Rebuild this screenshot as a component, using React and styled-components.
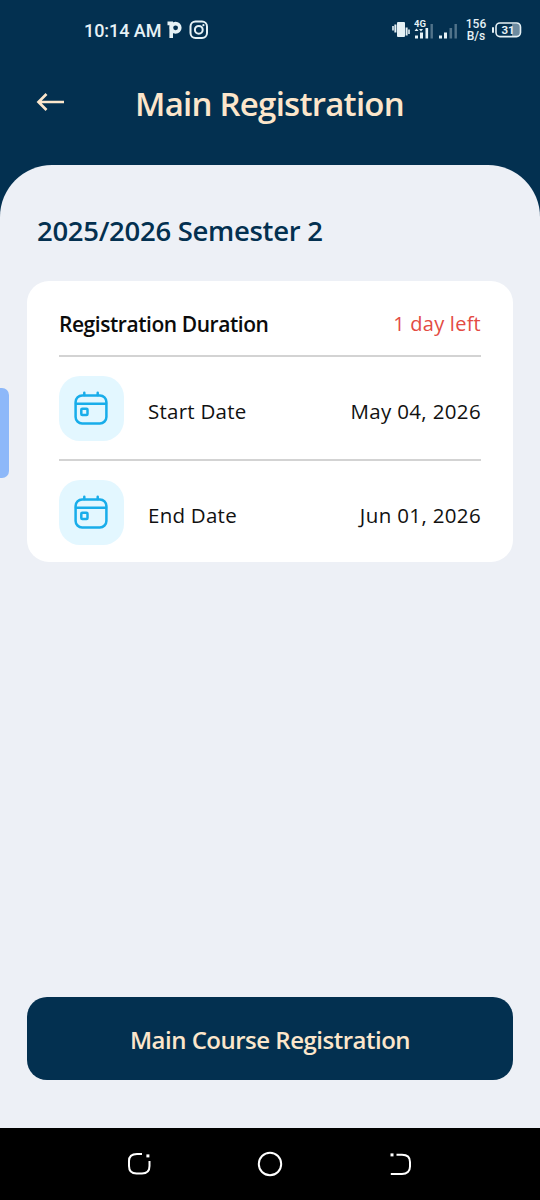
import styled, { createGlobalStyle } from "styled-components";

const GlobalStyle = createGlobalStyle`
  * {
    box-sizing: border-box;
  }

  body {
    margin: 0;
    background-color: #033050;
    font-family: "Open Sans", "Noto Sans", sans-serif;
  }
`;

const Screen = styled.div`
  position: relative;
  display: flex;
  flex-direction: column;
  width: 540px;
  height: 1200px;
  overflow: hidden;
  background-color: #033050;
`;

const StatusBar = styled.div`
  display: flex;
  justify-content: space-between;
  align-items: center;
  height: 60px;
  padding: 0 18px 0 84px;
  color: #e6f1f5;
  font-family: Roboto, sans-serif;
`;

const StatusGroup = styled.div`
  display: flex;
  align-items: center;
`;

const Time = styled.span`
  width: 83px;
  padding-top: 1px;
  font-size: 18px;
  font-weight: 500;
  letter-spacing: -0.05px;
  white-space: nowrap;
`;

const Speed = styled.div`
  width: 22px;
  margin: 0 5px 0 7px;
  font-size: 12px;
  font-weight: 500;
  line-height: 12px;
  text-align: center;
`;

const Header = styled.header`
  display: flex;
  align-items: center;
  height: 105px;
  padding: 0 36px 21px;
`;

const BackButton = styled.button`
  display: flex;
  width: 99px;
  height: 28px;
  padding: 0;
  border: none;
  background: transparent;
`;

const Title = styled.h1`
  margin: 4px 0 0;
  color: #fce6cb;
  font-size: 33px;
  font-weight: 600;
  letter-spacing: -0.75px;
  line-height: 44px;
  white-space: nowrap;
`;

const Sheet = styled.main`
  display: flex;
  flex: 1;
  flex-direction: column;
  padding: 44px 27px 48px;
  border-radius: 52px 52px 0 0;
  background-color: #edf0f6;
`;

const Semester = styled.h2`
  margin: 0 0 28px 10px;
  color: #033050;
  font-size: 27.5px;
  font-weight: 600;
  letter-spacing: -0.3px;
  line-height: 44px;
  white-space: nowrap;
`;

const Card = styled.section`
  height: 281px;
  padding: 10px 32px 0;
  border-radius: 22px;
  background-color: #ffffff;
`;

const CardHeader = styled.div`
  display: flex;
  justify-content: space-between;
  align-items: center;
  height: 66px;
  padding-top: 1px;
  border-bottom: 2px solid #d3d3d3;
`;

const CardTitle = styled.h3`
  margin: 0;
  color: #0b0b0b;
  font-size: 21px;
  font-weight: 600;
  letter-spacing: -0.45px;
`;

const Remaining = styled.span`
  color: #e34b43;
  font-size: 20px;
  letter-spacing: 0.25px;
`;

const DateRow = styled.div`
  display: flex;
  align-items: center;
  height: ${({ $last }) => ($last ? "102px" : "104px")};
  border-bottom: ${({ $last }) => ($last ? "none" : "2px solid #d3d3d3")};
`;

const IconTile = styled.div`
  display: flex;
  align-items: center;
  justify-content: center;
  width: 65px;
  height: 65px;
  padding-right: 2px;
  border-radius: 21px;
  background-color: #e3f7ff;
`;

const DateLabel = styled.span`
  margin: 5px auto 0 24px;
  color: #111111;
  font-size: 20.5px;
  letter-spacing: 0.25px;
`;

const DateValue = styled.span`
  margin-top: 5px;
  color: #111111;
  font-size: 20.5px;
  letter-spacing: 0.35px;
`;

const RegisterButton = styled.button`
  height: 83px;
  margin-top: auto;
  padding: 2px 0 0;
  border: none;
  border-radius: 20px;
  background-color: #033050;
  color: #fce6cb;
  font-family: inherit;
  font-size: 24px;
  font-weight: 600;
  letter-spacing: -0.5px;
`;

const NavBar = styled.nav`
  display: flex;
  justify-content: space-between;
  align-items: center;
  height: 72px;
  padding: 0 126px;
  background-color: #000000;
`;

const EdgeHandle = styled.div`
  position: absolute;
  top: 388px;
  left: 0;
  width: 9px;
  height: 90px;
  border-radius: 0 7px 7px 0;
  background-color: #8db8f9;
`;

const StyledCamera = styled.svg`
  margin-left: 7px;
`;

const StyledVibrate = styled.svg`
  margin-right: 4px;
`;

function PIcon() {
  return (
    <svg width="15" height="18" viewBox="0 0 15 18" fill="none">
      <path d="M0.5 2.4H4.2V17" stroke="#e6f1f5" strokeWidth="3.6" />
      <circle cx="8.6" cy="6.8" r="4.2" stroke="#e6f1f5" strokeWidth="3.6" />
    </svg>
  );
}

function CameraIcon() {
  return (
    <StyledCamera
      width="20"
      height="20"
      viewBox="0 0 20 20"
      fill="none"
      stroke="#e6f1f5"
      strokeWidth="2"
    >
      <rect x="1.5" y="1.5" width="16.5" height="16.5" rx="5" />
      <circle cx="9.8" cy="9.8" r="3.9" />
      <circle cx="14.4" cy="5.2" r="1.1" fill="#e6f1f5" stroke="none" />
    </StyledCamera>
  );
}

function VibrateIcon() {
  return (
    <StyledVibrate width="18" height="18" viewBox="0 0 18 18" fill="#e6f1f5">
      <rect x="5" y="1" width="8" height="15" rx="1" />
      <rect x="2.4" y="3.5" width="2" height="8" />
      <rect x="0.2" y="5" width="1.6" height="4.5" />
      <rect x="13.6" y="6.5" width="2" height="8" />
      <rect x="16.2" y="8.5" width="1.6" height="4.5" />
    </StyledVibrate>
  );
}

function SignalIcon({ network }) {
  return (
    <svg
      width={network ? 24 : 20}
      height="22"
      viewBox={network ? "0 0 24 22" : "0 0 20 22"}
      fill="#e6f1f5"
    >
      {network && (
        <>
          <text
            x="0"
            y="7.5"
            fontSize="9.5"
            fontWeight="700"
            fontFamily="Roboto, sans-serif"
          >
            {network}
          </text>
          <path d="M0.5 12L2.5 9.5L4.5 12ZM5 10L7 12.5L9 10Z" />
        </>
      )}
      <rect x="1" y="16.5" width="3" height="3" />
      <rect x="6" y="13.5" width="3" height="6" />
      <rect
        x="11.5"
        y="9"
        width="2.6"
        height="10.5"
        opacity={network ? 1 : 0.35}
      />
      <rect x="16.5" y="5" width="2.4" height="14.5" opacity="0.35" />
    </svg>
  );
}

function BatteryIcon({ level }) {
  return (
    <svg width="30" height="18" viewBox="0 0 30 18" fill="none">
      <rect x="0" y="6" width="2" height="6" rx="1" fill="#e6f1f5" />
      <rect x="20" y="3" width="8" height="12" fill="#6d8ba0" />
      <rect
        x="4"
        y="2"
        width="24.5"
        height="13.6"
        rx="4"
        stroke="#e6f1f5"
        strokeWidth="1.6"
      />
      <text
        x="16"
        y="13"
        fill="#e6f1f5"
        fontSize="11.5"
        fontWeight="700"
        fontFamily="Roboto, sans-serif"
        textAnchor="middle"
      >
        {level}
      </text>
    </svg>
  );
}

function ArrowIcon() {
  return (
    <svg
      width="28"
      height="28"
      viewBox="0 0 28 28"
      fill="none"
      stroke="#fce6cb"
      strokeWidth="2.7"
    >
      <path d="M28 14H3M10.5 6L2.5 14L10.5 22" />
    </svg>
  );
}

function CalendarIcon() {
  return (
    <svg
      width="34"
      height="34"
      viewBox="0 0 34 34"
      fill="none"
      stroke="#18adea"
      strokeWidth="2.5"
      strokeLinecap="round"
    >
      <rect x="1.6" y="4.4" width="30.8" height="28" rx="6.5" />
      <path d="M2 12.7H32M10.3 1.7V4M23.7 1.7V4" />
      <rect x="7.3" y="17.7" width="6.2" height="6.2" rx="1" />
    </svg>
  );
}

function RecentIcon() {
  return (
    <svg
      width="26"
      height="26"
      viewBox="0 0 26 26"
      fill="none"
      stroke="#ffffff"
      strokeWidth="2"
    >
      <path d="M16 3H11C5.5 3 3 5.5 3 10V15C3 20 5.5 22.5 10.5 22.5H16C21 22.5 23.5 20 23.5 15V10" />
      <rect x="20.4" y="3.4" width="3" height="3" fill="#ffffff" stroke="none" />
    </svg>
  );
}

function HomeIcon() {
  return (
    <svg width="26" height="26" viewBox="0 0 26 26" fill="none">
      <circle cx="13" cy="13" r="11.2" stroke="#ffffff" strokeWidth="2" />
    </svg>
  );
}

function ReturnIcon() {
  return (
    <svg
      width="26"
      height="26"
      viewBox="0 0 26 26"
      fill="none"
      stroke="#ffffff"
      strokeWidth="2"
    >
      <path d="M8.5 3.8H14C19 3.8 22 6.3 22 11V15.5C22 20 19 23 14 23H2.8" />
      <rect x="2.5" y="2.4" width="3" height="3" fill="#ffffff" stroke="none" />
    </svg>
  );
}

const dates = [
  { label: "Start Date", value: "May 04, 2026" },
  { label: "End Date", value: "Jun 01, 2026" },
];

export default function App() {
  return (
    <>
      <GlobalStyle />
      <Screen>
        <StatusBar>
          <StatusGroup>
            <Time>10:14 AM</Time>
            <PIcon />
            <CameraIcon />
          </StatusGroup>
          <StatusGroup>
            <VibrateIcon />
            <SignalIcon network="4G" />
            <SignalIcon />
            <Speed>156 B/s</Speed>
            <BatteryIcon level="31" />
          </StatusGroup>
        </StatusBar>
        <Header>
          <BackButton aria-label="Back">
            <ArrowIcon />
          </BackButton>
          <Title>Main Registration</Title>
        </Header>
        <Sheet>
          <Semester>2025/2026 Semester 2</Semester>
          <Card>
            <CardHeader>
              <CardTitle>Registration Duration</CardTitle>
              <Remaining>1 day left</Remaining>
            </CardHeader>
            {dates.map(({ label, value }, index) => (
              <DateRow key={label} $last={index === dates.length - 1}>
                <IconTile>
                  <CalendarIcon />
                </IconTile>
                <DateLabel>{label}</DateLabel>
                <DateValue>{value}</DateValue>
              </DateRow>
            ))}
          </Card>
          <RegisterButton>Main Course Registration</RegisterButton>
        </Sheet>
        <NavBar>
          <RecentIcon />
          <HomeIcon />
          <ReturnIcon />
        </NavBar>
        <EdgeHandle />
      </Screen>
    </>
  );
}
